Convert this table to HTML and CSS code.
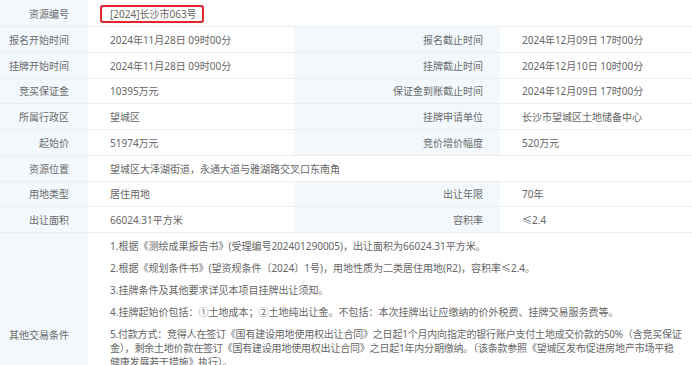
FILE: index.html
```html
<!DOCTYPE html>
<html lang="zh-CN">
<head>
<meta charset="utf-8">
<title>资源详情</title>
<link rel="stylesheet" href="styles.css">
</head>
<body>
<div class="info-grid">
  <div class="lbl">资源编号</div>
  <div class="val span3 first"><span class="code-box">[2024]长沙市063号</span></div>

  <div class="lbl">报名开始时间</div>
  <div class="val">2024年11月28日 09时00分</div>
  <div class="lbl lbl-r">报名截止时间</div>
  <div class="val">2024年12月09日 17时00分</div>

  <div class="lbl">挂牌开始时间</div>
  <div class="val">2024年11月28日 09时00分</div>
  <div class="lbl lbl-r">挂牌截止时间</div>
  <div class="val">2024年12月10日 10时00分</div>

  <div class="lbl">竞买保证金</div>
  <div class="val">10395万元</div>
  <div class="lbl lbl-r">保证金到账截止时间</div>
  <div class="val">2024年12月09日 17时00分</div>

  <div class="lbl">所属行政区</div>
  <div class="val">望城区</div>
  <div class="lbl lbl-r">挂牌申请单位</div>
  <div class="val">长沙市望城区土地储备中心</div>

  <div class="lbl">起始价</div>
  <div class="val">51974万元</div>
  <div class="lbl lbl-r">竞价增价幅度</div>
  <div class="val">520万元</div>

  <div class="lbl">资源位置</div>
  <div class="val span3">望城区大泽湖街道，永通大道与雅湖路交叉口东南角</div>

  <div class="lbl">用地类型</div>
  <div class="val">居住用地</div>
  <div class="lbl lbl-r">出让年限</div>
  <div class="val">70年</div>

  <div class="lbl">出让面积</div>
  <div class="val">66024.31平方米</div>
  <div class="lbl lbl-r">容积率</div>
  <div class="val">≤2.4</div>

  <div class="lbl">其他交易条件</div>
  <div class="val span3 terms">
    <p>1.根据《测绘成果报告书》(受理编号202401290005)，出让面积为66024.31平方米。</p>
    <p>2.根据《规划条件书》(望资规条件〔2024〕1号)，用地性质为二类居住用地(R2)，容积率≤2.4。</p>
    <p>3.挂牌条件及其他要求详见本项目挂牌出让须知。</p>
    <p>4.挂牌起始价包括：①土地成本；②土地纯出让金。不包括：本次挂牌出让应缴纳的价外税费、挂牌交易服务费等。</p>
    <p>5.付款方式：竞得人在签订《国有建设用地使用权出让合同》之日起1个月内向指定的银行账户支付土地成交价款的50%（含竞买保证<br>金），剩余土地价款在签订《国有建设用地使用权出让合同》之日起1年内分期缴纳。（该条款参照《望城区发布促进房地产市场平稳<br>健康发展若干措施》执行）。</p>
  </div>
</div>
</body>
</html>
```

FILE: styles.css
```css
html, body {
  margin: 0;
  padding: 0;
  background: #ffffff;
}

body {
  font-family: "Noto Sans", "Noto Sans CJK SC", sans-serif;
  font-size: 10px;
  color: #666666;
}

.info-grid {
  display: grid;
  grid-template-columns: 88px 206px 206px 1fr;
  grid-template-rows: 27px repeat(8, 25.75px) 204px;
  width: 692px;
}

.lbl,
.val {
  display: flex;
  align-items: center;
  border-bottom: 1px solid #ededed;
  box-sizing: border-box;
  white-space: nowrap;
}

.lbl {
  justify-content: flex-end;
  padding-right: 19px;
  background: #f2f8fc;
  color: #6b6b6b;
}

.lbl-r {
  padding-right: 17px;
}

.val {
  padding-left: 22px;
  background: #ffffff;
}

.span3 {
  grid-column: span 3;
}

.first {
  padding-left: 12px;
}

.code-box {
  display: inline-block;
  border: 2px solid #e3262e;
  border-radius: 3px;
  padding: 0 8px;
  line-height: 14px;
  width: 104px;
  box-sizing: border-box;
  margin-top: 1px;
}

.terms {
  display: block;
  padding-top: 6px;
  padding-right: 4px;
}

.terms p {
  margin: 0 0 8px;
  line-height: 14px;
}

.terms p:last-child {
  letter-spacing: -0.2px;
}
```
